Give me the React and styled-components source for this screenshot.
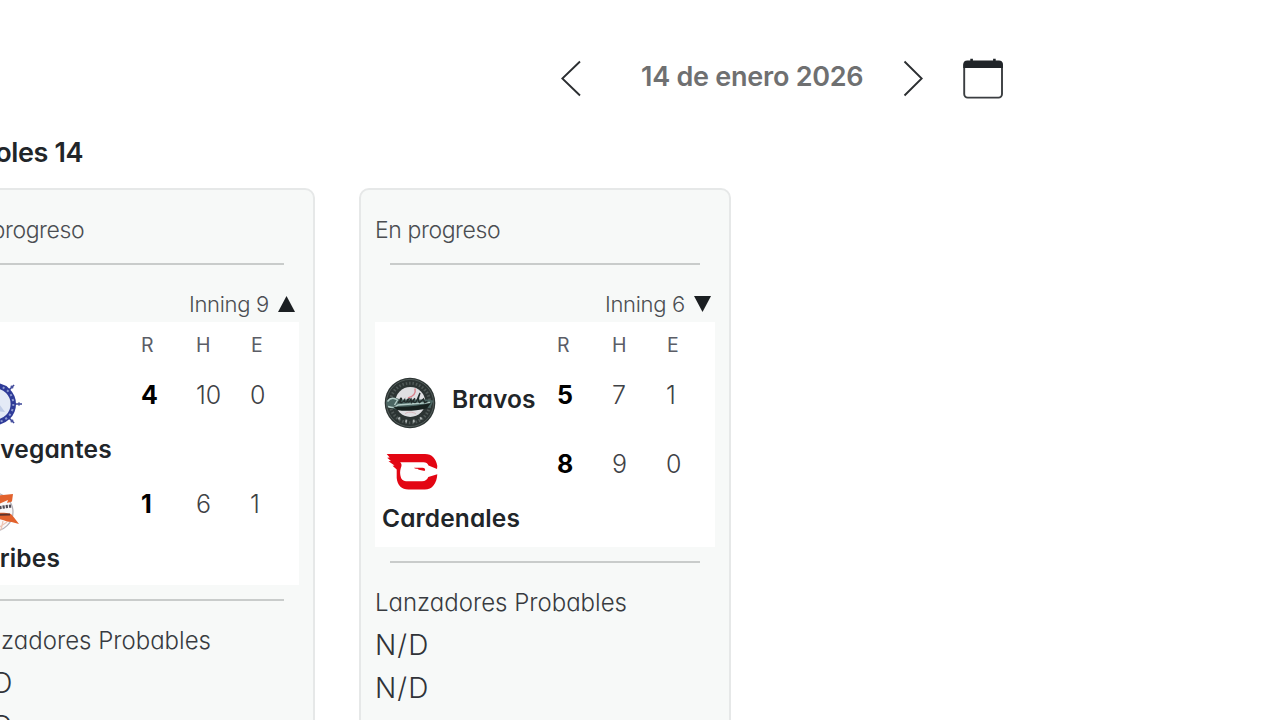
import React from 'react';
import styled, { createGlobalStyle } from 'styled-components';

const GlobalStyle = createGlobalStyle`
  * {
    box-sizing: border-box;
  }
  body {
    margin: 0;
    background: #fff;
    overflow: hidden;
    font-family: Inter, "Liberation Sans", sans-serif;
    font-feature-settings: "cv11";
    color: #212529;
  }
  p, h2 {
    margin: 0;
  }
`;

//data
const games = [
    {
        id: 1,
        status: "En progreso",
        inning: 9,
        half: "top",
        teams: [
            { name: "Navegantes", logo: "navegantes", r: 4, h: 10, e: 0, height: 109.3, stacked: true, spacing: 0.15 },
            { name: "Caribes", logo: "caribes", r: 1, h: 6, e: 1, height: 107.4, stacked: true, spacing: 0.15 },
        ],
    },
    {
        id: 2,
        status: "En progreso",
        inning: 6,
        half: "bottom",
        teams: [
            { name: "Bravos", logo: "bravos", r: 5, h: 7, e: 1, height: 69.3, stacked: false, spacing: 0.1 },
            { name: "Cardenales", logo: "cardenales", r: 8, h: 9, e: 0, height: 109.4, stacked: true, spacing: 0.1 },
        ],
    },
];

//Team logos
const BravosLogo = () => (
    <Logo viewBox="0 0 54 54">
        <circle cx="27" cy="27" r="25.3" fill="#2c3433" />
        <circle cx="27" cy="27" r="23.6" fill="none" stroke="#56605e" strokeWidth="0.9" />
        <circle cx="27" cy="27" r="19.8" fill="none" stroke="#87908f" strokeWidth="3" strokeDasharray="1.5 1.9" opacity="0.4" />
        <circle cx="27.3" cy="26" r="15" fill="#dfdfe2" />
        <path d="M32 12.5c1 4.500-2 8-7 9.500" fill="none" stroke="#d9818b" strokeWidth="1.4" />
        <path d="M22 38c2-2.500 8-2.500 11 0" fill="none" stroke="#d9b5ba" strokeWidth="1" />
        <path d="M3 26c3-5 9-5 14-2.500h27l6.500 1-3 7-17 2.500H15L4.500 31z" fill="#4b6663" />
        <path d="M4.500 25.500c3-4 7-3.500 10-1.500l-3 5M5 30.500c4 1.500 8 .5 10-1.500l32-2.500" fill="none" stroke="#b3cbc6" strokeWidth="1.4" />
        <path d="M15 26.500c2-1 4-3 3.500-4s-2 1-1.500 3 3 1 4.500-1.500c0 2 0 2.500 2 2l2.500-3c-2 0-2.500 3-.5 3s2-2.500 2.500-3l.5 3.500 3.500-4c-2 1-2 4 0 4s3.500-7 5-9.500c-1.500 4-2.500 8-.5 9.500l4-3.500 1 3.500 3-1" fill="none" stroke="#222c2b" strokeWidth="1.4" />
        <path d="M10 30.500c13 1 26-1 38-3.500l-4 5.500c-12 2.500-22 3-30 1.500z" fill="#17211f" />
        <path d="M15.500 43.500l1.300-2.200M23 46.500l.4-2.800M31 46.500l-.4-2.800M38.500 43.500l-1.300-2.200" stroke="#a9b0af" strokeWidth="1.8" />
    </Logo>
);

const CardenalesLogo = () => (
    <Logo viewBox="0 0 54 54">
        <path
            fill="#e30613"
            d="M3.7 9H42c7 0 11 4.500 12.300 12l-.3 3-8.500-3.500c-1-2-2.500-3.200-5-3.200H17.200c1.600 1.500 1.800 3.500.6 5.700-.9 3-.8 5.500-.3 8 .6 3.200 2.500 5.200 5.500 5.200H39c3.500 0 5.200-1.500 6.300-4.200l9-2.800c-.5 9-5 15.400-12.500 15.400H25.500c-7 0-11.200-4.500-11.800-11.500V24.500L9.500 20.700l2-.3-6-4.200 2.500-.3-3.800-3.100 2.500-.4z"
        />
        <path fill="#e30613" d="M31 22.800h8.500c2 0 3 1 2.500 3-2-.2-3.200-.2-5-.8-1.500 0-2-.8-2.500-1.200-1.500.2-2.800-.3-3.500-1z" />
    </Logo>
);

const NavegantesLogo = () => (
    <Logo viewBox="0 0 54 54">
        {[0, 45, 90, 135, 180, 225, 270, 315].map(a => (
            <g key={a} transform={`rotate(${a} 28 28)`}>
                <path d="M48 28h7" stroke="#3a4497" strokeWidth="1.5" />
                <path d="M52 26.3v3.4" stroke="#4a53a0" strokeWidth="1.3" />
            </g>
        ))}
        <circle cx="28" cy="28" r="18.3" fill="#e4eaf6" stroke="#2f3b98" strokeWidth="5.4" />
        <circle cx="28" cy="28" r="18.3" fill="none" stroke="#8e9ad0" strokeWidth="2" strokeDasharray="2 3.2" />
        <path d="M18 34l8-14 12 16z" fill="#c0cce6" />
    </Logo>
);

const CaribesLogo = () => (
    <Logo viewBox="0 0 54 54">
        <circle cx="27" cy="27" r="19" fill="#faf8f8" stroke="#b3afb6" strokeWidth="1.2" />
        <path d="M12 12l24-2 10-1-1 7.500-5 1.500 1-3-9 4-20 4z" fill="#e2622d" />
        <path d="M14 28c10-4 20-6 30.500-7" fill="none" stroke="#504b55" strokeWidth="3.2" strokeDasharray="2.2 1" />
        <path d="M12 31c12-3 24-4.500 32-2l3 3.500 5 6.500-7.500-2-4.500-.5C33 33 22 33 13 34z" fill="#e2622d" />
        <path d="M30 29.800l13-.3" stroke="#5e332c" strokeWidth="1.8" />
        <path d="M31 43l9-6M34 45l2-9" stroke="#edc4b4" strokeWidth="1.2" />
    </Logo>
);

const logos = {
    bravos: BravosLogo,
    cardenales: CardenalesLogo,
    navegantes: NavegantesLogo,
    caribes: CaribesLogo,
};

const DateNav = () => (
    <Nav>
        <Chevron viewBox="0 0 20 37">
            <path d="M19 1.500L1.300 18.500 19 35.500" />
        </Chevron>
        <DateText>14 de enero 2026</DateText>
        <Chevron viewBox="0 0 20 37">
            <path d="M1.500 1.500l17.200 17-17.200 17" />
        </Chevron>
        <CalendarIcon viewBox="0 0 42 42">
            <rect x="2.2" y="4" width="37.8" height="35.6" rx="3.5" fill="none" stroke="#3a3d40" strokeWidth="1.9" />
            <path d="M1.300 10V6.500a4 4 0 0 1 4-4h3V.8h2.600v1.700h20.200V.8h2.600v1.700h3.200a4 4 0 0 1 4 4V10z" fill="#212529" />
        </CalendarIcon>
    </Nav>
);

const Team = ({ team }) => {
    const TeamLogo = logos[team.logo];
    return (
        <TeamRow $height={team.height}>
            <TeamCell $stacked={team.stacked}>
                <TeamLogo />
                <TeamName $stacked={team.stacked} $spacing={team.spacing}>{team.name}</TeamName>
            </TeamCell>
            <Score $runs>{team.r}</Score>
            <Score>{team.h}</Score>
            <Score>{team.e}</Score>
        </TeamRow>
    );
};

const GameCard = ({ game }) => (
    <Card>
        <Status>{game.status}</Status>
        <Divider />
        <Inning>
            <span>Inning {game.inning}</span>
            <Half viewBox="0 0 17 16">
                <path d={game.half === "top" ? "M8.500 0L17 16H0z" : "M0 0h17L8.500 16z"} />
            </Half>
        </Inning>
        <Board>
            <BoardHead>
                <span />
                <span>R</span>
                <span>H</span>
                <span>E</span>
            </BoardHead>
            {game.teams.map(team => <Team key={team.name} team={team} />)}
        </Board>
        <Divider $bottom />
        <PitchersTitle>Lanzadores Probables</PitchersTitle>
        <Pitcher>N/D</Pitcher>
        <Pitcher>N/D</Pitcher>
    </Card>
);

export default function App() {
    return (
        <Page>
            <GlobalStyle />
            <DateNav />
            <DayTitle>Miércoles 14</DayTitle>
            <Games>
                {games.map(game => <GameCard key={game.id} game={game} />)}
            </Games>
        </Page>
    );
}

const Page = styled.div`
  height: 720px;
  overflow: hidden;
`;

const Nav = styled.header`
  display: flex;
  align-items: flex-start;
  height: 132px;
  padding: 60px 0 0 561px;
`;

const Chevron = styled.svg`
  flex: none;
  width: 20px;
  height: 37px;
  fill: none;
  stroke: #2b2e31;
  stroke-width: 1.9;
`;

const DateText = styled.p`
  width: 322px;
  padding: 1px 0 0 60px;
  font-size: 27px;
  font-weight: 600;
  line-height: 32px;
  letter-spacing: -0.25px;
  white-space: nowrap;
  color: #6f7071;
`;

const CalendarIcon = styled.svg`
  flex: none;
  width: 42px;
  height: 42px;
  margin: -2px 0 0 39px;
`;

const DayTitle = styled.h2`
  display: flex;
  justify-content: flex-end;
  width: 83px;
  height: 56px;
  font-size: 27px;
  font-weight: 600;
  line-height: 42px;
  letter-spacing: -0.4px;
  white-space: nowrap;
`;

const Games = styled.main`
  display: flex;
  align-items: flex-start;
  gap: 44px;
  margin-left: -57px;
`;

const Card = styled.section`
  flex: none;
  width: 372px;
  height: 620px;
  padding: 20px 14px;
  border: 2px solid #e6e8e8;
  border-radius: 10px;
  background: #f7f9f8;
`;

const Status = styled.p`
  height: 53px;
  font-size: 23px;
  font-weight: 300;
  line-height: 40px;
  letter-spacing: -0.4px;
  color: #4b4e52;
`;

const Divider = styled.div`
  height: 2px;
  margin: ${p => p.$bottom ? "14px 15px 18px" : "0 15px 19px"};
  background: #c9cccb;
`;

const Inning = styled.div`
  display: flex;
  justify-content: flex-end;
  align-items: center;
  gap: 9px;
  height: 38px;
  padding: 2px 4px 0 0;
  font-size: 22px;
  font-weight: 300;
  letter-spacing: -0.3px;
  color: #4b4e52;
`;

const Half = styled.svg`
  width: 17px;
  height: 16px;
  fill: #1b1f22;
`;

const Board = styled.div`
  padding-left: 1px;
  background: #fff;
`;

const BoardHead = styled.div`
  display: grid;
  grid-template-columns: 181px 55px 55px 1fr;
  height: 46px;
  font-size: 19.5px;
  line-height: 46px;
  color: #5b5d66;
`;

const TeamRow = styled.div`
  display: grid;
  grid-template-columns: 181px 55px 54px 1fr;
  height: ${p => p.$height}px;
`;

const TeamCell = styled.div`
  display: flex;
  flex-direction: ${p => p.$stacked ? "column" : "row"};
  gap: ${p => p.$stacked ? "0" : "15px"};
  padding: 8px 0 0 7px;
`;

const Logo = styled.svg`
  flex: none;
  width: 54px;
  height: 54px;
  overflow: visible;
`;

const TeamName = styled.span`
  font-size: 24.5px;
  font-weight: 600;
  line-height: ${p => p.$stacked ? 39 : 47}px;
  letter-spacing: ${p => p.$spacing}px;
  margin-left: ${p => p.$stacked ? "-1px" : "0"};
  white-space: nowrap;
`;

const Score = styled.span`
  font-size: 25px;
  font-weight: ${p => p.$runs ? 700 : 300};
  line-height: 54px;
  color: ${p => p.$runs ? "#000" : "#3f4246"};
`;

const PitchersTitle = styled.p`
  font-size: 24px;
  font-weight: 300;
  line-height: 43px;
  white-space: nowrap;
  color: #383b40;
`;

const Pitcher = styled.p`
  font-size: 28px;
  font-weight: 300;
  line-height: 43.5px;
  letter-spacing: 1.1px;
  color: #303338;
`;
